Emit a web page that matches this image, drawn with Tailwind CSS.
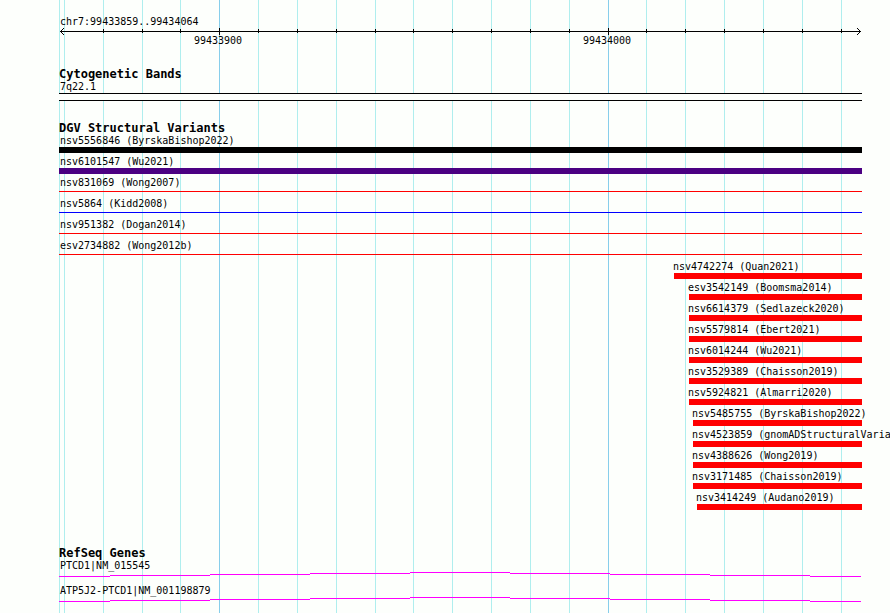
<!DOCTYPE html>
<html lang="en">
<head>
    <meta charset="UTF-8">
    <meta name="viewport" content="width=device-width, initial-scale=1.0">
    <title>chr7:99433859..99434064</title>
    <script src="https://cdn.jsdelivr.net/npm/@tailwindcss/browser@4"></script>
</head>
<body class="bg-[#fdfffc] text-black font-['DejaVu_Sans_Mono',monospace] text-[10px] leading-3">
    <main class="relative min-h-screen overflow-hidden pl-[59px] pr-7 pt-4">
        <!-- grid lines behind the tracks -->
        <div class="absolute inset-y-0 left-[59px] right-7">
            <svg id="grid" class="block w-full h-full" viewBox="0 0 803 100" preserveAspectRatio="none" shape-rendering="crispEdges"></svg>
        </div>

        <div class="relative">
            <header class="mb-5">
                <p class="pl-px">chr7:99433859..99434064</p>
                <svg class="block w-full h-[7px]" viewBox="0 0 803 7" preserveAspectRatio="none" shape-rendering="crispEdges">
                    <rect x="1" y="3" width="801" height="1"/>
                    <path d="M2 2h1v1h-1zM3 1h1v1h-1zM4 0h1v1h-1zM2 4h1v1h-1zM3 5h1v1h-1zM4 6h1v1h-1z"/>
                    <path d="M800 2h1v1h-1zM799 1h1v1h-1zM798 0h1v1h-1zM800 4h1v1h-1zM799 5h1v1h-1zM798 6h1v1h-1z"/>
                    <g id="ticks"></g>
                </svg>
                <div id="scale" class="relative h-3"></div>
            </header>

            <section class="mb-5">
                <h2 class="text-xs leading-[14px] font-bold">Cytogenetic Bands</h2>
                <p class="pl-px">7q22.1</p>
                <div class="h-2 border-y border-black bg-[#fdfffc]"></div>
            </section>

            <section class="mb-[33px]">
                <h2 class="text-xs leading-[14px] font-bold">DGV Structural Variants</h2>
                <div id="variants"></div>
            </section>

            <section>
                <h2 class="text-xs leading-[14px] font-bold">RefSeq Genes</h2>
                <div class="mb-2">
                    <p class="pl-px">PTCD1|NM_015545</p>
                    <svg class="block w-full h-[5px]" viewBox="0 0 803 5" preserveAspectRatio="none" shape-rendering="crispEdges" fill="#ff00ff">
                        <path id="intron" d="M0 4h51v1h-51zM51 3h100v1h-100zM151 2h100v1h-100zM251 1h100v1h-100zM351 0h100v1h-100zM451 1h100v1h-100zM551 2h100v1h-100zM651 3h100v1h-100zM751 4h51v1h-51z"/>
                    </svg>
                </div>
                <div class="mb-2">
                    <p class="pl-px">ATP5J2-PTCD1|NM_001198879</p>
                    <svg class="block w-full h-[5px]" viewBox="0 0 803 5" preserveAspectRatio="none" shape-rendering="crispEdges" fill="#ff00ff">
                        <use href="#intron"/>
                    </svg>
                </div>
            </section>
        </div>
    </main>

    <script>
        var WIDTH = 803;
        var minor = [5, 44, 83, 121, 199, 238, 277, 316, 354, 393, 432, 471, 510, 587, 626, 665, 704, 743, 782];
        var major = [[160, "99433900"], [549, "99434000"]];

        var thick = "h-1.5 mb-[3px]";
        var thin = "h-px mt-0.5 mb-1.5";
        // name, start, bar size, bar color
        var variants = [
            ["nsv5556846 (ByrskaBishop2022)", 0, thick, "bg-black"],
            ["nsv6101547 (Wu2021)", 0, thick, "bg-[#4b0082]"],
            ["nsv831069 (Wong2007)", 0, thin, "bg-[#ff0000]"],
            ["nsv5864 (Kidd2008)", 0, thin, "bg-[#0000ff]"],
            ["nsv951382 (Dogan2014)", 0, thin, "bg-[#ff0000]"],
            ["esv2734882 (Wong2012b)", 0, thin, "bg-[#ff0000]"],
            ["nsv4742274 (Quan2021)", 615, thick, "bg-[#ff0000]"],
            ["esv3542149 (Boomsma2014)", 630, thick, "bg-[#ff0000]"],
            ["nsv6614379 (Sedlazeck2020)", 630, thick, "bg-[#ff0000]"],
            ["nsv5579814 (Ebert2021)", 630, thick, "bg-[#ff0000]"],
            ["nsv6014244 (Wu2021)", 630, thick, "bg-[#ff0000]"],
            ["nsv3529389 (Chaisson2019)", 630, thick, "bg-[#ff0000]"],
            ["nsv5924821 (Almarri2020)", 630, thick, "bg-[#ff0000]"],
            ["nsv5485755 (ByrskaBishop2022)", 634, thick, "bg-[#ff0000]"],
            ["nsv4523859 (gnomADStructuralVaria", 634, thick, "bg-[#ff0000]"],
            ["nsv4388626 (Wong2019)", 634, thick, "bg-[#ff0000]"],
            ["nsv3171485 (Chaisson2019)", 634, thick, "bg-[#ff0000]"],
            ["nsv3414249 (Audano2019)", 638, thick, "bg-[#ff0000]"]
        ];

        var grid = '<rect x="0" width="1" height="100" fill="#afeeee"/>';
        var ticks = "";
        var scale = "";
        minor.forEach(function (x) {
            grid += '<rect x="' + x + '" width="1" height="100" fill="#afeeee"/>';
            if (x > 5) {
                ticks += '<rect x="' + x + '" y="1" width="1" height="4"/>';
            }
        });
        major.forEach(function (m) {
            grid += '<rect x="' + m[0] + '" width="1" height="100" fill="#87ceeb"/>';
            ticks += '<rect x="' + m[0] + '" y="0" width="1" height="7"/>';
            scale += '<span class="absolute top-0 -ml-px -translate-x-1/2" style="left:' + (m[0] / WIDTH * 100) + '%">' + m[1] + '</span>';
        });
        document.getElementById("grid").innerHTML = grid;
        document.getElementById("ticks").innerHTML = ticks;
        document.getElementById("scale").innerHTML = scale;

        document.getElementById("variants").innerHTML = variants.map(function (v) {
            return '<div class="flow-root" style="margin-left:' + (v[1] / WIDTH * 100) + '%">' +
                '<p class="whitespace-nowrap ' + (v[1] == 0 ? "pl-px" : "-ml-px") + '">' + v[0] + '</p>' +
                '<div class="' + v[2] + ' ' + v[3] + '"></div></div>';
        }).join("");
    </script>
</body>
</html>
